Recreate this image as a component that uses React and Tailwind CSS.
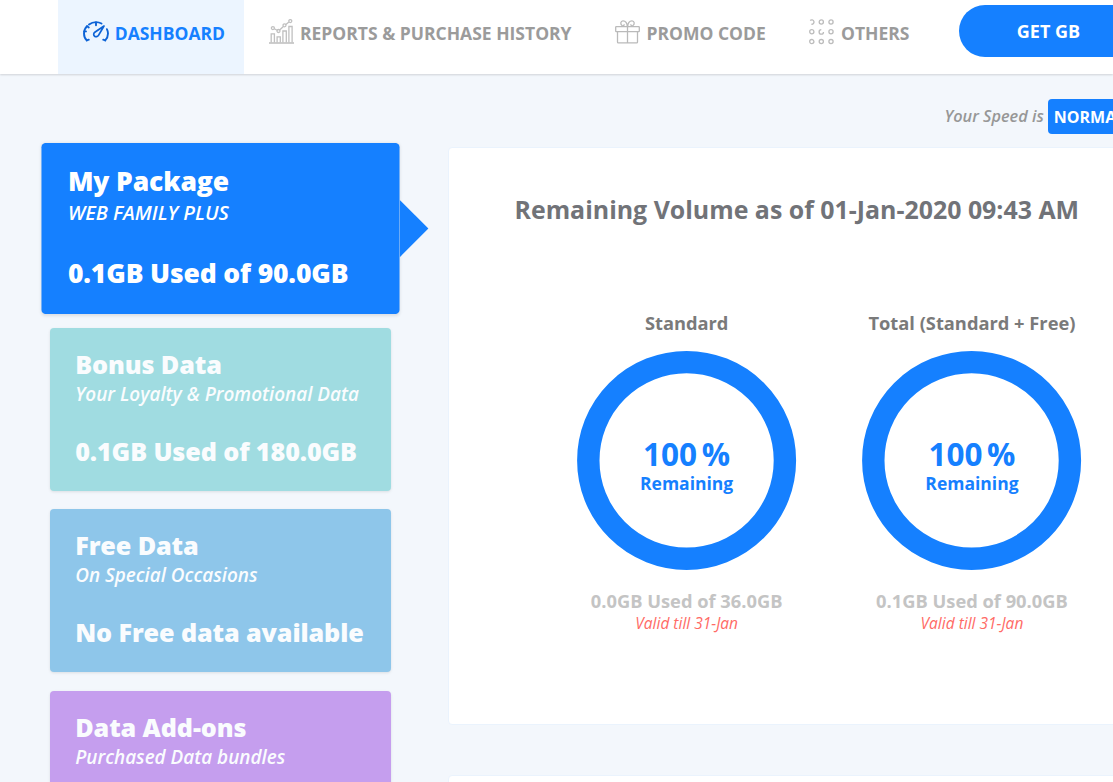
import clsx from 'clsx'

const GaugeIcon = () => (
  <svg className="-mt-[3px]" width="26" height="21" viewBox="0 0 26 21" fill="none" stroke="#0d63d6" strokeWidth="1.9" strokeLinecap="round" strokeLinejoin="round">
    <path d="M3.8 19.4C2 17.6 1 15.200 1 12.500C1 9.700 2.100 7.200 4 5.200M6 3.600C8 2 10.500 1.100 13 1.100C15 1.100 16.900 1.600 18.500 2.500M23.900 8.200C24.600 9.600 25 11 25 12.600C25 15.200 24 17.600 22.200 19.400"/>
    <path d="M13 1.500V4.200M4.200 5.200L5.800 6.500M1.200 10.400H3M3.800 19.400L5.800 18.700M22.200 19.400L20.200 18.700"/>
    <path strokeWidth="1.700" d="M21 5L11.800 11.300C10.300 12.400 10.400 14.300 11.600 15.200C12.900 16.100 14.700 15.800 15.500 14.400L21 5Z"/>
  </svg>
)

const ChartIcon = () => (
  <svg className="-mt-[3px]" width="25" height="25" viewBox="0 0 25 25" fill="none" stroke="#c0c0c0" strokeWidth="1.300">
    <path d="M0 24H25" strokeWidth="1.600"/>
    <path d="M2.200 23.500V14.900H5.400V23.500M8.100 23.500V17.900H11.300V23.500M13.900 23.500V12H17.300V23.500M19.900 23.500V7.500H23.100V23.500"/>
    <circle cx="3.900" cy="9.100" r="1.500"/><circle cx="9.500" cy="12" r="1.500"/><circle cx="15.500" cy="6.300" r="1.500"/><circle cx="21.300" cy="2.100" r="1.500"/>
    <path d="M5.300 9.800L8.100 11.300M10.600 10.900L14.400 7.400M16.800 5.400L20 3"/>
  </svg>
)

const GiftIcon = () => (
  <svg className="-mt-[3px]" width="25" height="24" viewBox="0 0 25 24" fill="none" stroke="#bababa" strokeWidth="1.300" strokeLinejoin="round">
    <rect x=".7" y="6.700" width="23.600" height="4.900" rx=".6"/>
    <path d="M2.500 11.600V22Q2.500 22.900 3.400 22.900H21.600Q22.500 22.900 22.500 22V11.600M12.500 6.700V22.900"/>
    <path d="M12.300 6.700C12.300 3.300 10.500 .7 8 .8C5.600 .9 5 4.100 7 5.500C7.800 6.100 8.700 5.900 9.500 4.400M12.700 6.700C12.700 3.300 14.500 .7 17 .8C19.400 .9 20 4.100 18 5.500C17.200 6.100 16.300 5.900 15.500 4.400"/>
  </svg>
)

const DotsIcon = () => (
  <svg className="-mt-[3px]" width="25" height="26" viewBox="0 0 25 26" fill="none" stroke="#bcbcbc" strokeWidth="1.300">
    {[12.300,22].map(x=><circle key={x} cx={x} cy="3" r="2.100"/>)}
    {[2.800,22].map(x=><circle key={x} cx={x} cy="12.800" r="2.100"/>)}
    {[2.800,12.300,22].map(x=><circle key={x} cx={x} cy="22.600" r="2.100"/>)}
    <path d="M1.200 1.500A2.200 2.200 0 1 1 2.400 5.200M12.300 10.700A2.200 2.200 0 1 0 14.500 12.900"/>
  </svg>
)

const CARDS = [
  { title:'My Package', sub:'WEB FAMILY PLUS', usage:'0.1GB Used of 90.0GB', bg:'bg-[#1580ff]', active:true },
  { title:'Bonus Data', sub:'Your Loyalty & Promotional Data', usage:'0.1GB Used of 180.0GB', bg:'bg-[#a0dce1]' },
  { title:'Free Data', sub:'On Special Occasions', usage:'No Free data available', bg:'bg-[#8ec6ea]' },
  { title:'Data Add-ons', sub:'Purchased Data bundles', bg:'bg-[#c59eee]' },
]

const GAUGES = [
  { label:'Standard', used:'0.0GB Used of 36.0GB' },
  { label:'Total (Standard + Free)', used:'0.1GB Used of 90.0GB' },
]

function NavItem({ icon, label, className }){
  return (
    <a className={clsx('flex shrink-0 items-center whitespace-nowrap text-[17.500px] font-bold leading-6', className)}>
      {icon}<span>{label}</span>
    </a>
  )
}

function PackageCard({ title, sub, usage, bg, active }){
  return (
    <div className={clsx('relative h-[163px] shrink-0 whitespace-nowrap rounded pl-[25.200px] pt-[18px] shadow-[0_1px_3px_rgba(0,0,0,0.1)]', bg, active ? 'scale-105 text-white' : 'text-[#fafcfe]')}>
      <h3 className="text-[25.200px] font-extrabold leading-9 tracking-[-0.12px]">{title}</h3>
      <p className="text-[18.900px] font-semibold italic leading-6">{sub}</p>
      {usage&&<p className="mt-[27px] text-[25.200px] font-extrabold leading-9 tracking-[-0.12px]">{usage}</p>}
      {active&&<span className="absolute left-full top-[54px] h-[55px] w-[27.500px] bg-[#1580ff] [clip-path:polygon(0_0,100%_50%,0_100%)]"/>}
    </div>
  )
}

function Gauge({ label, used }){
  return (
    <div className="flex w-[285.300px] flex-col items-center whitespace-nowrap">
      <h4 className="text-[18.300px] font-bold leading-6 text-[#7a7a7a]">{label}</h4>
      <div className="mt-[15px] grid h-[220px] w-[220px] text-[#1580ff]">
        <svg className="col-start-1 row-start-1" width="220" height="220" viewBox="0 0 220 220" fill="none" stroke="currentColor">
          <circle cx="109.600" cy="110.400" r="98.300" strokeWidth="22.400"/>
        </svg>
        <div className="col-start-1 row-start-1 flex flex-col items-center pt-[88px]">
          <span className="text-[31.500px] font-bold leading-8 [word-spacing:-3.500px]">100 %</span>
          <span className="mt-px text-[17.500px] font-bold leading-6">Remaining</span>
        </div>
      </div>
      <p className="mt-[19px] text-[18.300px] font-bold leading-6 text-[#c4c4c4]">{used}</p>
      <p className="text-[15.500px] font-medium italic leading-5 text-[#ff6b66]">Valid till 31-Jan</p>
    </div>
  )
}

export default function App(){
  return (
    <div className="flex h-[782px] w-[1113px] flex-col overflow-hidden bg-[#f3f7fc] font-['Open_Sans',sans-serif]">
      <header className="z-10 flex h-[74px] shrink-0 bg-white text-[#9b9b9b] shadow-[0_1px_2px_rgba(0,0,0,0.15)]">
        <NavItem icon={<GaugeIcon/>} label="DASHBOARD" className="ml-[58px] w-[186px] gap-[6px] bg-[#ecf5ff] pb-2 pl-[24.700px] text-[#1580ff]"/>
        <NavItem icon={<ChartIcon/>} label="REPORTS & PURCHASE HISTORY" className="w-[371px] gap-[6px] pb-2 pl-[25px]"/>
        <NavItem icon={<GiftIcon/>} label="PROMO CODE" className="w-[194px] gap-[6.500px] pb-2"/>
        <NavItem icon={<DotsIcon/>} label="OTHERS" className="w-[150px] gap-[7px] pb-2"/>
        <button className="mt-[5px] h-[52px] w-[179px] shrink-0 whitespace-nowrap rounded-full bg-[#1580ff] text-[18px] font-bold text-white">GET GB</button>
      </header>

      <div className="flex min-h-0 flex-1">
        <aside className="ml-[50px] mt-[73px] flex w-[341px] shrink-0 flex-col gap-[18.200px]">
          {CARDS.map(c=><PackageCard key={c.title} {...c}/>)}
        </aside>

        <main className="ml-[57px] flex w-[720px] shrink-0 flex-col">
          <div className="mt-[25px] flex h-[35px] shrink-0 items-center gap-1 whitespace-nowrap pl-[496.500px]">
            <span className="text-[16.300px] font-semibold italic text-[#979797]">Your Speed is</span>
            <span className="flex h-[35px] items-center rounded bg-[#1580ff] px-1.5 text-[16px] font-bold text-white">NORMAL</span>
          </div>
          <section className="mt-[13px] h-[578px] shrink-0 rounded border border-[#eaf3fd] bg-white pt-[43px]">
            <h2 className="whitespace-nowrap pl-[65.500px] text-[24.920px] font-bold leading-9 text-[#717378]">Remaining Volume as of 01-Jan-2020 09:43 AM</h2>
            <div className="mt-[84px] flex pl-[95px]">
              {GAUGES.map(g=><Gauge key={g.label} {...g}/>)}
            </div>
          </section>
          <section className="mt-[50px] h-[200px] shrink-0 rounded border border-[#eaf3fd] bg-white"/>
        </main>
      </div>
    </div>
  )
}
